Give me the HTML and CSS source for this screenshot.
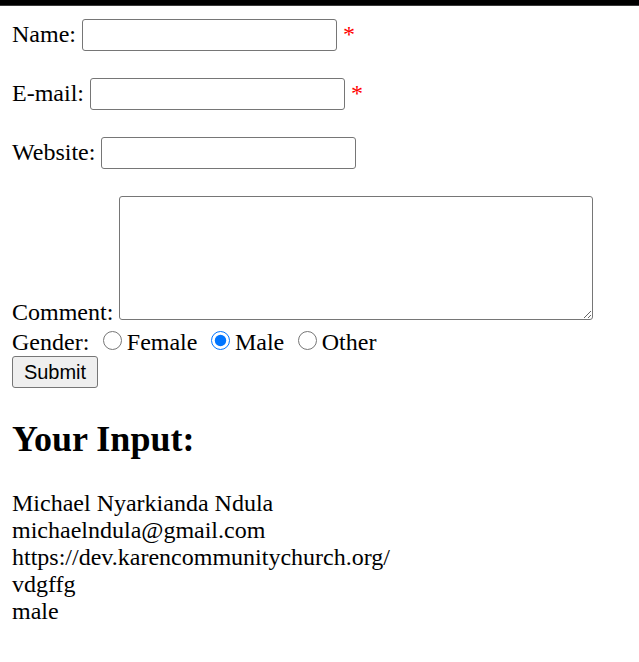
FILE: index.html
```html
<!DOCTYPE html>
<html lang="en">
<head>
<meta charset="utf-8">
<title>PHP Form Validation</title>
<link rel="stylesheet" href="styles.css">
</head>
<body>
<div class="topbar"></div>
<main class="page">
<form class="form" method="post" action="#">
Name: <input class="field" type="text" name="name"> <span class="error">*</span>
<br><br>
E-mail: <input class="field" type="text" name="email"> <span class="error">*</span>
<br><br>
Website: <input class="field" type="text" name="website">
<br><br>
Comment: <textarea class="comment" name="comment" rows="5" cols="40"></textarea>
<br>
Gender:
<input class="radio" type="radio" name="gender" value="female">Female
<input class="radio" type="radio" name="gender" value="male" checked>Male
<input class="radio" type="radio" name="gender" value="other">Other
<br>
<input class="submit" type="submit" name="submit" value="Submit">
</form>
<h2 class="title">Your Input:</h2>
<p class="output">Michael Nyarkianda Ndula<br>michaelndula@gmail.com<br>https://dev.karencommunitychurch.org/<br>vdgffg<br>male</p>
</main>
</body>
</html>
```
FILE: styles.css
```css
html, body {
  margin: 0;
  padding: 0;
  background: #fff;
}
body {
  font-family: "Liberation Serif", "Times New Roman", serif;
  font-size: 24px;
  color: #000;
}
.topbar {
  height: 5px;
  background: #000;
  border-bottom: 1px solid #3a3a3a;
}
.page {
  padding: 13px 12px 12px 12px;
}
.form {
  margin: 0;
}
.field {
  box-sizing: border-box;
  width: 255px;
  height: 32px;
  margin: 0;
  padding: 1px 3px;
  border: 1px solid #767676;
  border-radius: 3px;
  font-family: Arial, "Liberation Sans", sans-serif;
  font-size: 20px;
  background: #fff;
}
.error {
  color: #ff0000;
}
.comment {
  box-sizing: border-box;
  width: 474px;
  height: 124px;
  margin: 0;
  padding: 3px;
  border: 1px solid #767676;
  border-radius: 3px;
  font-family: "Liberation Mono", monospace;
  font-size: 20px;
  vertical-align: baseline;
}
.radio {
  width: 19.5px;
  height: 19.5px;
  margin: 4.5px 4.5px 0 7.5px;
  accent-color: #0075ff;
}
.submit {
  box-sizing: border-box;
  width: 86px;
  height: 32px;
  margin: 0;
  padding: 1px 9px;
  border: 1px solid #767676;
  border-radius: 3px;
  background: #efefef;
  font-family: Arial, "Liberation Sans", sans-serif;
  font-size: 20px;
  color: #000;
}
.title {
  font-size: 36px;
  font-weight: bold;
  margin: 30px 0;
}
.output {
  margin: 0;
}
```
